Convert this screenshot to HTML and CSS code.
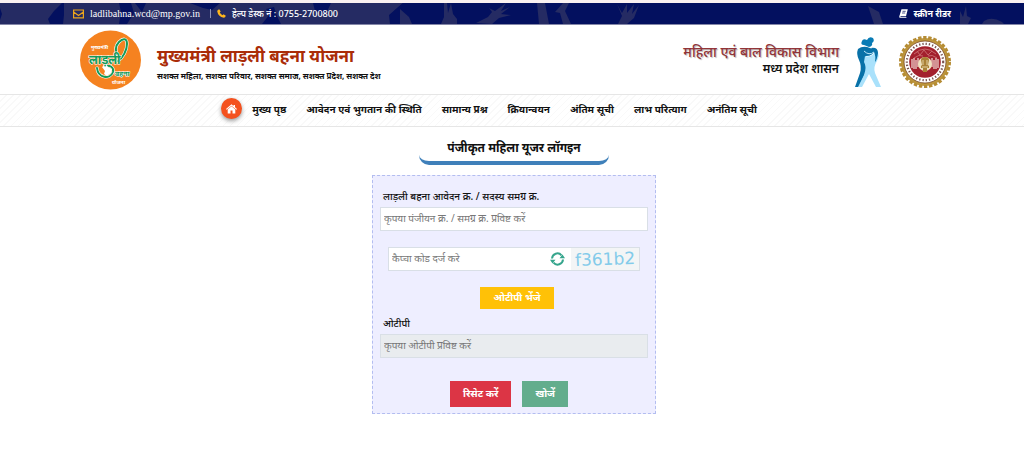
FILE: index.html
```
<!DOCTYPE html>
<html lang="hi">
<head>
  <meta charset="UTF-8">
  <meta name="viewport" content="width=device-width, initial-scale=1.0">
  <title>मुख्यमंत्री लाड़ली बहना योजना</title>
  <link rel="stylesheet" href="styles.css">
</head>
<body>
  <div class="topbar">
    <svg class="topbar-art" width="1024" height="21" viewBox="0 0 1024 21" aria-hidden="true">
      <path fill="#252b63" d="M0 0h403l-8 7-4 5 7 3 13 1 1 5H0z"/>
      <g fill="#03105f">
        <path d="M0 5l2 6-2 6zM54 8l8-8h2v12l-1 9H50l-2-5zM119 0h12l3 10-7 11h-8l2-12zM135 0h11l-4 9zM190 0h30l-8 7-9-2zM262 21l8-10-4-5 8-2 3 9 4 8zM313 0h18l-5 11-11-3zM389 12l14-12h9v21H390z"/>
      </g>
      <g fill="#252b63">
        <path d="M400 6l9 8 3 7h-12zM444 0h3l1 10 3-10 2 11 4 5v5h-16l3-7zM476 20l12-6 4-5-3-4 6 3 11-8-5 8 9-4-9 7 10 1-12 3-7 6zM537 0h8l4 21h-10zM555 9l8-9h6l-4 8 6 13h-8l-3-11zM617 1l5 9 5-9v9l7-9-2 10 7-9-5 13-7 6h-9l4-8zM868 3l6 18h9l-4-12zM960 8l3 6 3-11 1 10 4 2-3 6h-8zM984 18q8-5 18 1l2 2h-22z"/>
      </g>
    </svg>
    <div class="container topbar-row">
      <div class="contact">
        <svg width="11" height="10" viewBox="0 0 11 10" aria-hidden="true"><path d="M.6 1h9.800v7.800H.6zM.6 3l4.900 3.400L10.400 3" fill="none" stroke="#eda51c" stroke-width="1.200"/></svg>
        <a class="mail" href="mailto:ladlibahna.wcd@mp.gov.in">ladlibahna.wcd@mp.gov.in</a>
        <span class="divider"></span>
        <svg width="9" height="9" viewBox="0 0 9 9" aria-hidden="true"><path fill="#ffb61c" d="M2.200.2L3.700 2.500 2.700 3.500Q3.800 5.300 5.500 6.300L6.500 5.300 8.800 6.800Q8.300 8.800 6.800 8.800Q1 7.400.2 2.200Q.4.500 2.200.2z"/></svg>
        <span class="phone">हेल्प डेस्क नं : 0755-2700800</span>
      </div>
      <a class="reader" href="#">
        <svg width="9" height="9" viewBox="0 0 9 9" aria-hidden="true"><path fill="#fff" d="M2.500.3H8.800L7 7.200H1.500V8H7.400V8.800H1Q0 8.700.3 7.200z"/><path d="M3.500 2.300h3.200M3 4h3.200" stroke="#03105f" stroke-width=".7"/></svg>
        स्क्रीन रीडर
      </a>
    </div>
  </div>

  <header class="container masthead">
    <svg class="logo" width="61" height="60" viewBox="0 0 61 60" role="img" aria-label="लाड़ली बहना योजना">
      <ellipse cx="30.500" cy="30" rx="30.500" ry="29.500" fill="#f58220"/>
      <g fill="none" stroke-linecap="round">
        <path d="M38 31C43 28 47 20 47 14S43 8 39 12 35 22 38 26M17 38c1 10 13 12 16 4 1-5-3-7-8-6" stroke="#fff" stroke-width="3.200"/>
        <path d="M38 31C43 28 47 20 47 14S43 8 39 12 35 22 38 26M17 38c1 10 13 12 16 4 1-5-3-7-8-6" stroke="#159a59" stroke-width="2"/>
      </g>
      <path fill="#fff" d="M22 37l4-3 2 3 4 2-1 4-4 3-3-2 1-3z"/>
      <text class="logo-small" x="11" y="19">मुख्यमंत्री</text>
      <text class="logo-big" x="9" y="34">लाड़ली</text>
      <text class="logo-mid" x="35" y="46">बहना</text>
      <text class="logo-small" x="32" y="54">योजना</text>
    </svg>
    <div class="brand">
      <h1>मुख्यमंत्री लाड़ली बहना योजना</h1>
      <p>सशक्त महिला, सशक्त परिवार, सशक्त समाज, सशक्त प्रदेश, सशक्त देश</p>
    </div>
    <div class="department">
      <strong>महिला एवं बाल विकास विभाग</strong>
      <span>मध्य प्रदेश शासन</span>
    </div>
    <svg class="figure" width="26" height="52" viewBox="0 0 26 52" aria-hidden="true">
      <path fill="#087bb5" d="M7 5Q8 2 12 4Q14 0 18 2Q20 5 17 7Q18 10 14 11L9 9Q5 9 7 5z"/>
      <path fill="#0871a8" d="M3 13Q8 9 15 12L20 14Q18 20 11 20L10 27Q13 34 9 40L4 51H0L5 37Q7 30 4 24Q1 18 3 13z"/>
      <path fill="#a9e1fb" d="M10 20Q14 22 20 17L22 15Q25 19 22 25Q18 31 20 37L26 51H21L14 38L7 51H3L9 39Q12 31 9 26z"/>
      <path fill="#0871a8" d="M16 12Q23 11 23 17Q22 24 20 26Q21 20 19 16z"/>
      <path fill="none" stroke="#bfe8fb" d="M9 15q5 5 10 1"/>
    </svg>
    <svg class="emblem" width="52" height="52" viewBox="0 0 52 52" role="img" aria-label="मध्य प्रदेश शासन">
      <circle cx="26" cy="26" r="24" fill="#bd963c"/>
      <circle cx="26" cy="26" r="24.500" fill="none" stroke="#b58c34" stroke-width="3" stroke-dasharray="3.400 1.730"/>
      <circle cx="26" cy="26" r="21" fill="#fff" stroke="#7b4926" stroke-width=".8"/>
      <circle cx="26" cy="26" r="18.200" fill="none" stroke="#7a5350" stroke-width="2.200" stroke-dasharray="1.300 2"/>
      <circle cx="26" cy="26" r="15.800" fill="#a3202d"/>
      <path d="M15 18q11-10 22 0M18 15l3 4 4-5 4 5 4-4M15 22q5-4 9-2M29 20q4-2 9 2" fill="none" stroke="#c8686c"/>
      <path d="M13 23v9M15 22v11M17 24v9M19 22v9M33 22v9M35 24v9M37 22v11M39 23v9" stroke="#f3dfd9" stroke-width="1.200"/>
      <circle cx="26" cy="28" r="7" fill="#efe2bf"/>
      <path fill="#a98136" d="M22 24q0-3 4-3t4 3l-1 5 1 1v2h-2v4h-4v-4h-2v-2l1-1z"/>
      <path d="M24 24v5M28 24v5M23 31h6" stroke="#f3e5bd" stroke-width=".8"/>
    </svg>
  </header>

  <nav class="menu">
    <a class="home" href="#" aria-label="होम">
      <svg width="11" height="10" viewBox="0 0 11 10" aria-hidden="true"><path fill="#fff" d="M5.500.3L7.500 2V.9H9V3.300L11 5 10.400 5.800 5.500 1.700.6 5.800 0 5zM5.500 2.200L9.300 5.400V9.500H6.500V6.500H4.500V9.500H1.700V5.400z"/></svg>
    </a>
    <a href="#">मुख्य पृष्ठ</a>
    <a href="#">आवेदन एवं भुगतान की स्थिति</a>
    <a href="#">सामान्य प्रश्न</a>
    <a href="#">क्रियान्वयन</a>
    <a href="#">अंतिम सूची</a>
    <a href="#">लाभ परित्याग</a>
    <a href="#">अनंतिम सूची</a>
  </nav>

  <main>
    <h2 class="title">पंजीकृत महिला यूजर लॉगइन</h2>
    <form class="login">
      <label for="regno">लाड़ली बहना आवेदन क्र. / सदस्य समग्र क्र.</label>
      <input class="field" id="regno" type="text" placeholder="कृपया पंजीयन क्र. / समग्र क्र. प्रविष्ट करें">
      <div class="captcha">
        <input type="text" aria-label="कैप्चा कोड" placeholder="कैप्चा कोड दर्ज करे">
        <button class="refresh" type="button" aria-label="नया कैप्चा">
          <svg width="15" height="14" viewBox="0 0 15 14" aria-hidden="true"><path d="M2 6.500A5.400 5.400 0 0 1 11.500 3.300M13 7.500A5.400 5.400 0 0 1 3.500 10.700" fill="none" stroke="#35a58c" stroke-width="2"/><path fill="#35a58c" d="M9.500 6.200H15L12.500 2.500zM0 7.800H5.500L2.500 11.500z"/></svg>
        </button>
        <svg class="code" width="68" height="22" viewBox="0 0 68 22" role="img" aria-label="कैप्चा">
          <text x="4" y="17" transform="rotate(-2 34 11)">f361b2</text>
        </svg>
      </div>
      <button class="btn send" type="button">ओटीपी भेंजे</button>
      <label for="otp">ओटीपी</label>
      <input class="field" id="otp" type="text" placeholder="कृपया ओटीपी प्रविष्ट करें" disabled>
      <div class="actions">
        <button class="btn reset" type="reset">रिसेट करें</button>
        <button class="btn search" type="submit">खोजें</button>
      </div>
    </form>
  </main>
</body>
</html>
```
FILE: styles.css
```
* {
  box-sizing: border-box;
}
body {
  margin: 0;
  background: #fff;
  color: #111;
  font-family: "Noto Sans", "Noto Sans Devanagari", sans-serif;
  font-size: 10px;
}
a {
  color: inherit;
  text-decoration: none;
}
.container {
  max-width: 1100px;
  margin: 0 auto;
  padding: 0 73px;
}

/* top bar */
.topbar {
  position: relative;
  overflow: hidden;
  background: #03105f;
  border-top: 3px solid #faf1f1;
  border-bottom: 1px solid #8487a8;
  color: #fff;
}
.topbar-art {
  position: absolute;
  left: 0;
  top: 0;
}
.topbar-row {
  position: relative;
  display: flex;
  justify-content: space-between;
  align-items: center;
  height: 21px;
  font-size: 9px;
}
.contact, .reader {
  display: flex;
  align-items: center;
  gap: 6px;
}
.mail {
  font-family: "Liberation Serif", serif;
  font-size: 10px;
}
.divider {
  width: 1px;
  height: 9px;
  margin-left: 4px;
  background: #8d91b5;
}
.phone {
  font-weight: 500;
}
.reader {
  font-weight: bold;
}

/* header */
.masthead {
  display: flex;
  align-items: center;
  height: 69px;
}
.logo {
  margin: 0 16px 0 7px;
}
.logo text {
  font-weight: bold;
}
.logo-small {
  font-size: 5px;
  fill: #fff;
}
.logo-big {
  font-size: 12px;
  fill: #159a59;
  stroke: #fff;
  stroke-width: 1px;
  paint-order: stroke;
}
.logo-mid {
  font-size: 7px;
  fill: #159a59;
  stroke: #fff;
  stroke-width: 1px;
  paint-order: stroke;
}
.brand h1 {
  margin: 0;
  padding-top: 8px;
  color: #aa2c07;
  font-size: 17px;
  line-height: 25px;
}
.brand p {
  margin: 0;
  font-size: 8px;
  font-weight: bold;
  line-height: 16px;
}
.department {
  display: flex;
  flex-direction: column;
  margin-left: auto;
  text-align: right;
  font-size: 12px;
  font-weight: 600;
  line-height: 16px;
}
.department strong {
  color: #923438;
  font-size: 14px;
  font-weight: 500;
  line-height: 18px;
  text-shadow: 1px 1px 1px #bbb;
}
.figure {
  margin: 4px 18px 0 16px;
}
.emblem {
  margin-top: 4px;
}

/* menu */
.menu {
  display: flex;
  justify-content: center;
  align-items: center;
  gap: 20px;
  height: 33px;
  padding: 0 46px 4px 0;
  border: 1px solid #e6e6e6;
  border-width: 1px 0;
  background: repeating-linear-gradient(135deg, #fff 0 4px, #f9f9f9 4px 5px);
  font-weight: bold;
}
.home {
  display: grid;
  place-items: center;
  width: 21px;
  height: 21px;
  margin-right: -10px;
  border-radius: 50%;
  background: #f4511e;
  box-shadow: 0 2px 4px #999;
}

/* login form */
main {
  display: flex;
  flex-direction: column;
  align-items: center;
  padding-left: 4px;
}
.title {
  width: 190px;
  margin: 11px 0 10px;
  padding-bottom: 3px;
  border-bottom: 4px solid #3f80ba;
  border-radius: 0 0 10px 10px;
  text-align: center;
  font-size: 12px;
  line-height: 20px;
}
.login {
  display: flex;
  flex-direction: column;
  width: 284px;
  padding: 12px 7px 6px;
  border: 1px dashed #b3bdf0;
  background: #eef;
}
.login label {
  padding: 0 3px 2px;
  font-weight: 500;
  line-height: 17px;
}
.login input {
  color: #333;
  font: inherit;
}
.login input::placeholder {
  color: #777;
}
.field {
  width: 100%;
  height: 24px;
  padding: 0 3px 2px;
  border: 1px solid #d9dfe6;
  background: #fff;
}
.field:disabled {
  background: #e9ecef;
}
.captcha {
  display: flex;
  align-items: center;
  height: 24px;
  margin: 16px 8px;
  border: 1px solid #d9dfe6;
  background: #fff;
}
.captcha input {
  flex: 1;
  min-width: 0;
  padding: 0 3px 2px;
  border: 0;
}
.refresh {
  display: flex;
  padding: 0 6px;
  border: 0;
  background: none;
}
.code {
  background: #f3f5f6;
  fill: #83cbea;
  font-family: "DejaVu Sans", sans-serif;
  font-size: 17px;
}
.btn {
  padding: 0 13px 2px;
  border: 0;
  color: #fff;
  font: inherit;
  font-weight: bold;
}
.send {
  align-self: center;
  height: 22px;
  margin: 0 0 6px 6px;
  background: #ffc107;
}
.actions {
  display: flex;
  justify-content: center;
  gap: 11px;
  margin: 23px 10px 0 0;
}
.actions .btn {
  height: 26px;
}
.reset {
  background: #dc3545;
}
.search {
  background: #63ad8d;
}
```
